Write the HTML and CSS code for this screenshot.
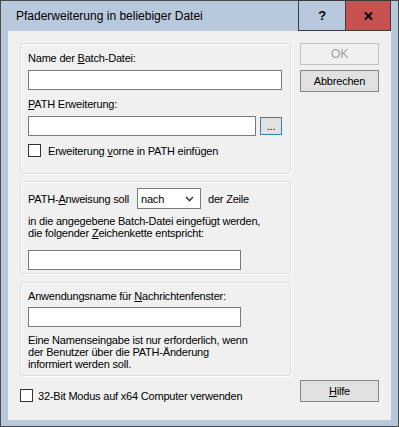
FILE: index.html
```html
<!DOCTYPE html>
<html lang="de">
<head>
    <meta charset="UTF-8">
    <title>Pfaderweiterung in beliebiger Datei</title>
    <link rel="stylesheet" href="styles.css">
</head>
<body>
    <div class="window">
        <!-- Titelleiste -->
        <div class="titlebar">
            <div class="title">Pfaderweiterung in beliebiger Datei</div>
            <div class="tbtn help">?</div>
            <div class="tbtn close">
                <svg width="9" height="8" viewBox="0 0 9 8"><path d="M1 0.5 L8 7.5 M8 0.5 L1 7.5" stroke="#000" stroke-width="2"/></svg>
            </div>
        </div>

        <div class="client">
            <div class="left">
                <!-- Batch-Datei und PATH -->
                <div class="group group-path">
                    <div class="label">Name der <u>B</u>atch-Datei:</div>
                    <div class="input input-full"></div>
                    <div class="label label-second"><u>P</u>ATH Erweiterung:</div>
                    <div class="row">
                        <div class="input input-browse"></div>
                        <div class="browse">...</div>
                    </div>
                    <div class="check-row">
                        <span class="checkbox"></span>
                        <span class="check-text">Erweiterung <u>v</u>orne in PATH einfügen</span>
                    </div>
                </div>

                <!-- Position der Anweisung -->
                <div class="group group-position">
                    <div class="row">
                        <span class="row-text">PATH-<u>A</u>nweisung soll</span>
                        <div class="select">
                            <span>nach</span>
                            <svg width="9" height="6" viewBox="0 0 9 6"><path d="M1 1 L4.5 4.5 L8 1" fill="none" stroke="#404040" stroke-width="1.6"/></svg>
                        </div>
                        <span>der Zeile</span>
                    </div>
                    <div class="text">in die angegebene Batch-Datei eingefügt werden,<br>die folgender <u>Z</u>eichenkette entspricht:</div>
                    <div class="input input-medium"></div>
                </div>

                <!-- Anwendungsname -->
                <div class="group group-app">
                    <div class="label">Anwendungsname für <u>N</u>achrichtenfenster:</div>
                    <div class="input input-medium"></div>
                    <div class="text text-info">Eine Namenseingabe ist nur erforderlich, wenn<br>der Benutzer über die PATH-Änderung<br>informiert werden soll.</div>
                </div>

                <div class="check-row check-32">
                    <span class="checkbox"></span>
                    <span class="check-text">32-Bit Modus auf x64 Computer verwenden</span>
                </div>
            </div>

            <!-- Schaltflächen -->
            <div class="buttons">
                <div class="button disabled">OK</div>
                <div class="button">Abbrechen</div>
                <div class="button button-help"><u>H</u>ilfe</div>
            </div>
        </div>
    </div>
</body>
</html>
```

FILE: styles.css
```css
/* Grundlayout */
body {
    margin: 0;
    font-family: "Liberation Sans", Arial, sans-serif;
    font-size: 11px;
    letter-spacing: -0.2px;
    color: #000;
}

u {
    text-decoration: underline;
    text-underline-offset: 1px;
}

/* Fensterrahmen */
.window {
    width: 399px;
    height: 427px;
    box-sizing: border-box;
    border: 1px solid #4a4a4a;
    background-color: #b9c9dd;
    padding: 0 7px 8px 7px;
    display: flex;
    flex-direction: column;
}

/* Titelleiste */
.titlebar {
    height: 30px;
    display: flex;
    align-items: flex-start;
    flex-shrink: 0;
}

.title {
    flex: 1;
    padding-left: 8px;
    line-height: 30px;
    font-size: 12px;
    letter-spacing: 0;
}

.tbtn {
    height: 31px;
    margin-top: -1px;
    box-sizing: border-box;
    border: 1px solid #3c3c3c;
    display: flex;
    align-items: center;
    justify-content: center;
    font-weight: bold;
    font-size: 13px;
}

.help {
    width: 48px;
}

.close {
    width: 45px;
    border-left: none;
    background-color: #c75050;
}

/* Inhaltsbereich */
.client {
    flex: 1;
    background-color: #f0f0f0;
    display: flex;
    padding: 12px 12px 18px 12px;
}

.left {
    width: 271px;
}

.group {
    box-sizing: border-box;
    border: 1px solid #dcdcdc;
    border-radius: 3px;
    box-shadow: inset 1px 1px 0 #fff, 1px 1px 0 #fff;
    padding: 0 7px;
}

.group-path {
    height: 131px;
    padding-top: 8px;
}

.group-position {
    height: 93px;
    margin-top: 7px;
    padding-top: 6px;
}

.group-app {
    height: 94px;
    margin-top: 8px;
    padding-top: 7px;
}

.label {
    line-height: 13px;
    margin-bottom: 5px;
}

.label-second {
    margin-top: 8px;
}

.group-app .label {
    margin-bottom: 4px;
}

.input {
    height: 20px;
    box-sizing: border-box;
    border: 1px solid #7a7a7a;
    background-color: #fff;
}

.input-full {
    width: 254px;
}

.input-browse {
    width: 228px;
}

.input-medium {
    width: 213px;
}

.row {
    display: flex;
    align-items: center;
}

.browse {
    width: 22px;
    height: 18px;
    box-sizing: border-box;
    margin-left: 4px;
    border: 1px solid #3c7fb1;
    background-color: #e1e1e1;
    text-align: center;
    line-height: 16px;
}

.check-row {
    display: flex;
    align-items: center;
    height: 13px;
    margin-top: 8px;
}

.checkbox {
    width: 13px;
    height: 13px;
    box-sizing: border-box;
    border: 1px solid #333;
    background-color: #fff;
}

.check-text {
    margin-left: 7px;
}

.check-32 {
    margin-top: 13px;
}

.check-32 .check-text {
    margin-left: 5px;
}

.row-text {
    width: 109px;
}

.select {
    width: 64px;
    height: 21px;
    box-sizing: border-box;
    border: 1px solid #7a7a7a;
    background-color: #fff;
    display: flex;
    align-items: center;
    justify-content: space-between;
    padding: 0 6px 0 3px;
    margin-right: 7px;
}

.text {
    line-height: 12px;
    margin-top: 6px;
}

.group-position .input {
    margin-top: 11px;
}

.text-info {
    margin-top: 7px;
}

/* Schaltflächen rechts */
.buttons {
    width: 79px;
    margin-left: 9px;
    display: flex;
    flex-direction: column;
}

.button {
    height: 22px;
    box-sizing: border-box;
    border: 1px solid #858585;
    background-color: #e1e1e1;
    text-align: center;
    line-height: 20px;
    margin-bottom: 5px;
}

.button.disabled {
    border-color: #c3c3c3;
    background-color: #f0f0f0;
    color: #a0a0a0;
    font-size: 12px;
}

.button-help {
    margin-top: auto;
    margin-bottom: 0;
}
```
